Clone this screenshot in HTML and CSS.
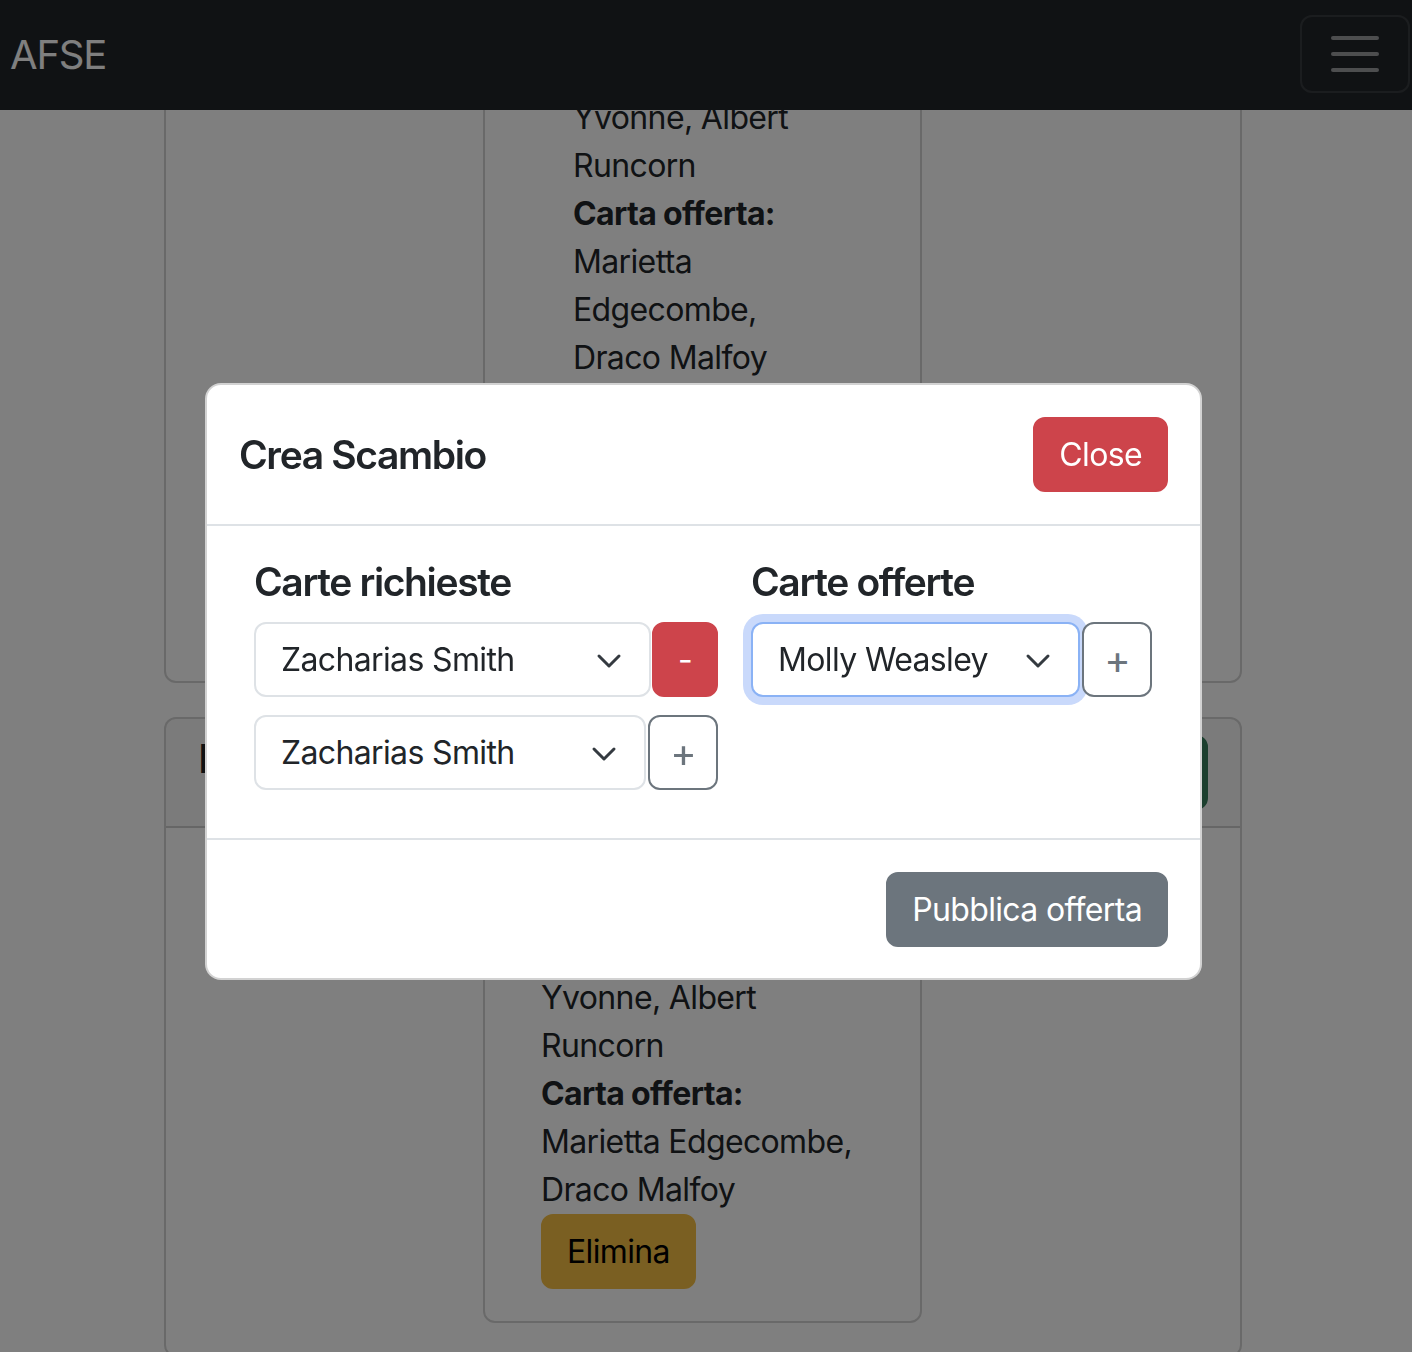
FILE: index.html
```html
<!DOCTYPE html>
<html lang="it">
<head>
<meta charset="utf-8">
<title>AFSE</title>
<link rel="stylesheet" href="styles.css">
</head>
<body>
<nav class="navbar">
  <a class="brand">AFSE</a>
  <button class="toggler" aria-label="Menu"><span class="bar"></span><span class="bar"></span><span class="bar"></span></button>
</nav>
<main class="viewport">
  <div class="feed">
    <section class="card">
      <header class="card-header">
        <h5 class="card-title">Proposta di scambio</h5>
        <button class="btn btn-success">Accetta</button>
      </header>
      <div class="card-body first">
        <div class="trade">
          <p class="lines"><strong>Carta richiesta:</strong><br>Yvonne, Albert<br>Runcorn<br><strong>Carta offerta:</strong><br>Marietta<br>Edgecombe,<br>Draco Malfoy</p>
          <button class="btn btn-warning">Elimina</button>
        </div>
      </div>
    </section>
    <section class="card">
      <header class="card-header">
        <h5 class="card-title">Proposta di scambio</h5>
        <button class="btn btn-success">Accetta</button>
      </header>
      <div class="card-body">
        <div class="trade wide">
          <p class="lines"><strong>Carta richiesta:</strong><br>Yvonne, Albert<br>Runcorn<br><strong>Carta offerta:</strong><br>Marietta Edgecombe,<br>Draco Malfoy</p>
          <button class="btn btn-warning">Elimina</button>
        </div>
      </div>
    </section>
  </div>
</main>
<div class="backdrop"></div>
<div class="modal">
  <div class="modal-dialog">
    <div class="modal-content">
      <div class="modal-header">
        <h5 class="modal-title">Crea Scambio</h5>
        <button class="btn btn-danger">Close</button>
      </div>
      <div class="modal-body">
        <div class="col col-left">
          <h4 class="col-title">Carte richieste</h4>
          <div class="pick-row tight">
            <div class="select w-a"><span>Zacharias Smith</span><svg viewBox="0 0 16 16"><path d="m3 6 5 5 5-5" fill="none" stroke="#343a40" stroke-width="1.5" stroke-linecap="round" stroke-linejoin="round"/></svg></div>
            <button class="btn btn-danger btn-sq minus">-</button>
          </div>
          <div class="pick-row">
            <div class="select w-b"><span>Zacharias Smith</span><svg viewBox="0 0 16 16"><path d="m3 6 5 5 5-5" fill="none" stroke="#343a40" stroke-width="1.5" stroke-linecap="round" stroke-linejoin="round"/></svg></div>
            <button class="btn btn-outline btn-sq plus">+</button>
          </div>
        </div>
        <div class="col col-right">
          <h4 class="col-title">Carte offerte</h4>
          <div class="pick-row">
            <div class="select w-c focus"><span>Molly Weasley</span><svg viewBox="0 0 16 16"><path d="m3 6 5 5 5-5" fill="none" stroke="#343a40" stroke-width="1.5" stroke-linecap="round" stroke-linejoin="round"/></svg></div>
            <button class="btn btn-outline btn-sq plus">+</button>
          </div>
        </div>
      </div>
      <div class="modal-footer">
        <button class="btn btn-secondary">Pubblica offerta</button>
      </div>
    </div>
  </div>
</div>
</body>
</html>
```

FILE: styles.css
```css
* { box-sizing: border-box; }
html, body { margin: 0; }
body {
  font-family: Inter, "Noto Sans", "Liberation Sans", sans-serif;
  font-size: 32px;
  line-height: 48px;
  letter-spacing: -0.02em;
  color: #212529;
  background: #fff;
  height: 1352px;
  overflow: hidden;
}

/* navbar */
.navbar {
  height: 110px;
  background: #212529;
  display: flex;
  align-items: center;
  justify-content: space-between;
  padding: 0 2px 0 10px;
}
.brand { color: #fff; font-size: 40px; line-height: 60px; letter-spacing: -0.03em; }
.toggler {
  width: 110px;
  height: 78px;
  border: 2px solid rgba(255,255,255,.1);
  border-radius: 12px;
  background: transparent;
  display: flex;
  flex-direction: column;
  align-items: center;
  justify-content: center;
  gap: 12px;
  padding: 0;
  margin-top: -2px;
}
.bar { width: 48px; height: 4px; border-radius: 2px; background: rgba(255,255,255,.55); }

/* page behind the modal */
.viewport { height: 1242px; overflow: hidden; }
.feed { margin: -273px 0 0 164px; width: 1078px; }
.card {
  border: 2px solid rgba(0,0,0,.175);
  border-radius: 12px;
  background: #fff;
}
.card + .card { margin-top: 34px; }
.card-header {
  display: flex;
  justify-content: space-between;
  align-items: flex-start;
  padding: 16px 32px;
  background: rgba(0,0,0,.03);
  border-bottom: 2px solid rgba(0,0,0,.175);
  border-radius: 10px 10px 0 0;
}
.card-title { margin: 0; font-size: 40px; line-height: 48px; font-weight: 500; }
.card-body { padding: 32px; }
.card-body.first { padding-bottom: 186px; }
.first .btn-warning { margin-top: 4px; }
.trade {
  margin-left: 285px;
  width: 439px;
  border: 2px solid rgba(0,0,0,.175);
  border-radius: 12px;
  padding: 64px 32px 32px 88px;
}
.trade.wide { padding-left: 56px; }
.lines { margin: 0; }
.lines strong { font-weight: 700; }

/* buttons */
.btn {
  font-family: inherit;
  font-size: 32px;
  line-height: 47px;
  letter-spacing: -0.02em;
  padding: 12px 24px;
  border: 2px solid transparent;
  border-radius: 12px;
  cursor: pointer;
  white-space: nowrap;
}
.btn-success { background: #387e5c; border-color: #387e5c; color: #fff; }
.btn-warning { background: #f5bf44; border-color: #f5bf44; color: #000; }
.btn-danger { background: #cd444b; border-color: #cd444b; color: #fff; }
.btn-secondary { background: #6c757d; border-color: #6c757d; color: #fff; }
.btn-outline { background: #fff; border-color: #6c757d; color: #6c757d; }
.btn-sq {
  height: 75px;
  padding: 0;
  display: flex;
  align-items: center;
  justify-content: center;
}
.minus { width: 66px; }
.plus { width: 70px; font-size: 40px; }

/* modal */
.backdrop { position: fixed; inset: 0; background: rgba(0,0,0,.5); z-index: 5; }
.modal { position: fixed; inset: 0; z-index: 10; }
.modal-dialog { width: 997px; margin: 383px 0 0 205px; }
.modal-content {
  background: #fff;
  border: 2px solid rgba(0,0,0,.175);
  border-radius: 16px;
}
.modal-header {
  display: flex;
  justify-content: space-between;
  align-items: center;
  padding: 32px;
  border-bottom: 2px solid #dee2e6;
}
.modal-title { margin: 0; font-size: 39px; line-height: 60px; font-weight: 600; letter-spacing: -0.035em; }
.modal-body {
  display: flex;
  gap: 33px;
  padding: 32px 32px 48px 47px;
}
.col-left { width: 464px; }
.col-right { width: 402px; }
.col-title { margin: 0 0 16px; font-size: 39px; line-height: 48px; font-weight: 600; letter-spacing: -0.035em; }
.pick-row { display: flex; gap: 2px; }
.pick-row.tight { gap: 1px; }
.pick-row + .pick-row { margin-top: 18px; }
.select {
  display: flex;
  align-items: center;
  justify-content: space-between;
  height: 75px;
  padding: 0 24px 0 25px;
  border: 2px solid #dee2e6;
  border-radius: 12px;
  background: #fff;
}
.select svg { width: 32px; height: 32px; flex: none; }
.w-a { width: 397px; }
.w-b { width: 392px; }
.w-c { width: 329px; }
.focus { border-color: #8ab2f5; box-shadow: 0 0 0 8px #c9d9fb; }
.modal-footer {
  display: flex;
  justify-content: flex-end;
  padding: 32px 32px 31px;
  border-top: 2px solid #dee2e6;
}
```
